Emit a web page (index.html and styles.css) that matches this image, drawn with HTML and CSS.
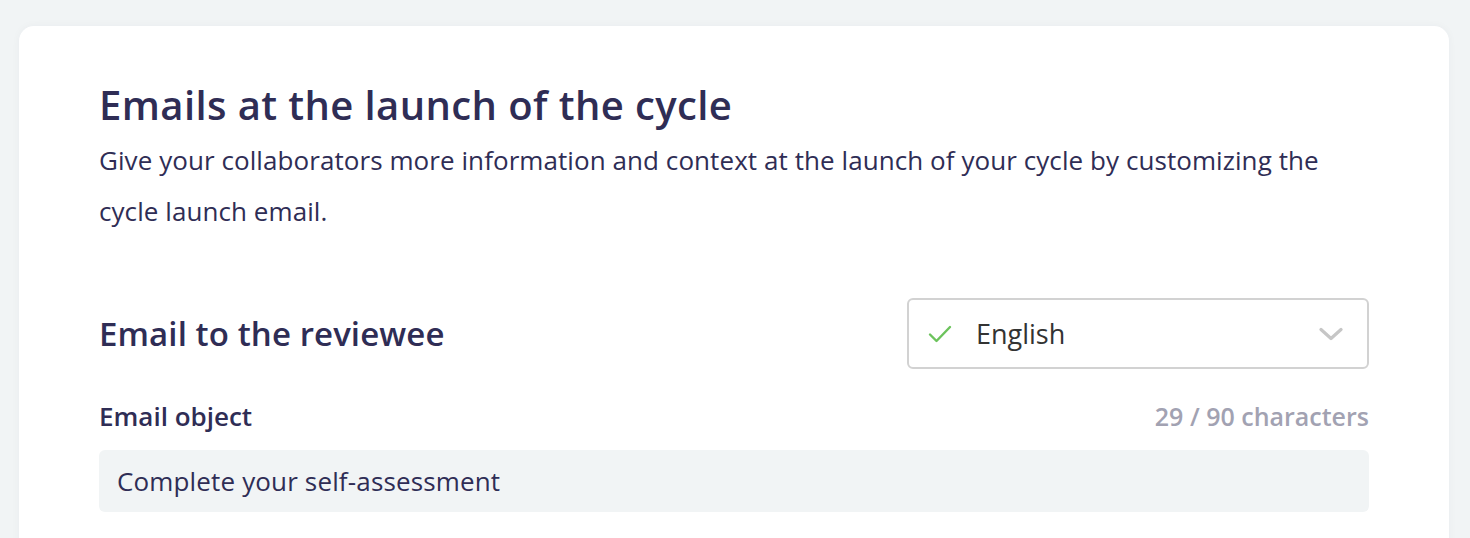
FILE: index.html
```html
<!DOCTYPE html>
<html lang="en">
<head>
<meta charset="utf-8">
<link rel="stylesheet" href="styles.css">
</head>
<body>
<main class="page">
  <section class="card">
    <h1 class="title">Emails at the launch of the cycle</h1>
    <p class="intro">Give your collaborators more information and context at the launch of your cycle by customizing the cycle launch email.</p>

    <div class="section-head">
      <h2 class="section-title">Email to the reviewee</h2>
      <div class="select">
        <svg class="check" width="24" height="18" viewBox="0 0 24 18"><path d="M2 9.5 L8.5 16 L22 2" fill="none" stroke="#6cc35c" stroke-width="2.4" stroke-linecap="round" stroke-linejoin="round"/></svg>
        <span class="select-value">English</span>
        <svg class="chevron" width="24" height="14" viewBox="0 0 24 14"><path d="M2 2.5 L12 11.5 L22 2.5" fill="none" stroke="#c6c6c6" stroke-width="3.2" stroke-linecap="round" stroke-linejoin="round"/></svg>
      </div>
    </div>

    <div class="field-head">
      <span class="field-label">Email object</span>
      <span class="counter">29 / 90 characters</span>
    </div>
    <div class="input">Complete your self-assessment</div>
  </section>
</main>
</body>
</html>
```

FILE: styles.css
```css
html, body {
  margin: 0;
  padding: 0;
}
body {
  background: #f1f4f5;
  font-family: "Open Sans", "Noto Sans", sans-serif;
  color: #2f2d55;
}
.page {
  padding: 26px 21px 0 19px;
}
.card {
  background: #ffffff;
  border-radius: 15px;
  box-shadow: 0 0 8px rgba(40, 50, 80, 0.04);
  padding: 55px 80px 40px 80px;
  min-height: 600px;
}
.title {
  margin: 0;
  font-size: 40px;
  font-weight: 600;
  line-height: 48px;
  letter-spacing: 0.4px;
  color: #2f2d55;
}
.intro {
  margin: 6px 0 0 0;
  font-size: 26px;
  line-height: 51px;
  letter-spacing: 0.07px;
  color: #2f2d55;
}
.section-head {
  margin-top: 61px;
  display: flex;
  align-items: center;
  justify-content: space-between;
}
.section-title {
  margin: 0;
  font-size: 33px;
  font-weight: 600;
  letter-spacing: 0.1px;
  color: #2f2d55;
}
.select {
  width: 462px;
  height: 71px;
  box-sizing: border-box;
  border: 2px solid #d2d2d2;
  border-radius: 6px;
  display: flex;
  align-items: center;
  padding: 0 24px 0 19px;
}
.check {
  flex: none;
}
.select-value {
  flex: 1;
  margin-left: 24px;
  font-size: 27px;
  color: #333333;
}
.chevron {
  flex: none;
}
.field-head {
  margin-top: 32px;
  height: 30px;
  display: flex;
  justify-content: space-between;
  align-items: center;
}
.field-label {
  font-size: 26px;
  font-weight: 600;
  color: #2f2d55;
}
.counter {
  font-size: 25px;
  font-weight: 600;
  color: #a2a2b2;
}
.input {
  margin-top: 19px;
  height: 62px;
  background: #f1f4f5;
  border-radius: 6px;
  display: flex;
  align-items: center;
  padding: 0 18px;
  font-size: 26px;
  letter-spacing: 0.15px;
  color: #2f2d55;
}
```
